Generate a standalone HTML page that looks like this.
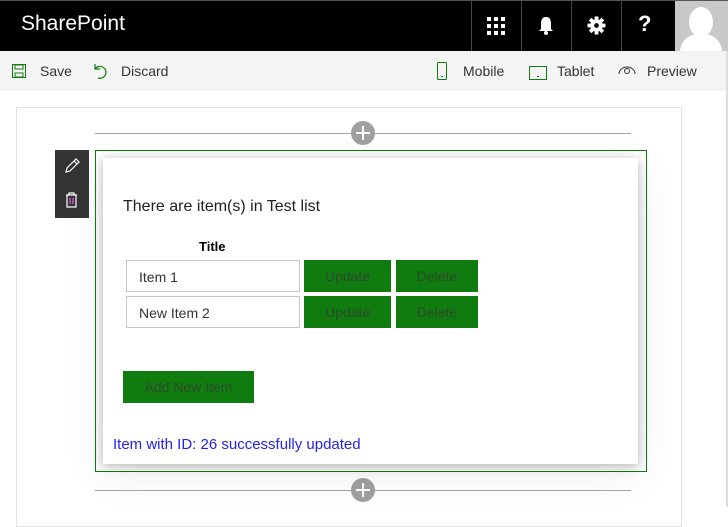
<!DOCTYPE html>
<html><head><style>
*{margin:0;padding:0;box-sizing:border-box}
body{width:728px;height:507px;overflow:hidden;background:#fff;font-family:"Liberation Sans",sans-serif;position:relative}
.a{position:absolute}
.top{left:0;top:0;width:728px;height:51px;background:#000;border-top:1px solid #555}
.sep{top:0;width:1px;height:51px;background:#444}
.tb{left:0;top:51px;width:728px;height:40px;background:#f4f4f4;font-size:14px;color:#333}
.btn{background:#107c10;color:#2d4a2d;font-size:14px;text-align:center}
.inp{border:1px solid #c8c8c8;background:#fff;font-size:14px;color:#333;padding:8px 12px}
.plus{width:24px;height:24px;border-radius:50%;background:#a0a0a0}
.plus:before{content:"";position:absolute;left:5px;top:11px;width:14px;height:2px;background:#fff}
.plus:after{content:"";position:absolute;left:11px;top:5px;width:2px;height:14px;background:#fff}
</style></head><body>
<div class="a top"></div>
<div class="a" style="left:21px;top:12px;color:#fff;font-size:21px">SharePoint</div>
<div class="a sep" style="left:471px"></div><div class="a sep" style="left:521px"></div><div class="a sep" style="left:571px"></div><div class="a sep" style="left:621px"></div>
<svg class="a" style="left:487px;top:17px" width="18" height="18"><g fill="#fff"><rect x="0" y="0" width="4" height="4"/><rect x="7" y="0" width="4" height="4"/><rect x="14" y="0" width="4" height="4"/><rect x="0" y="7" width="4" height="4"/><rect x="7" y="7" width="4" height="4"/><rect x="14" y="7" width="4" height="4"/><rect x="0" y="14" width="4" height="4"/><rect x="7" y="14" width="4" height="4"/><rect x="14" y="14" width="4" height="4"/></g></svg>
<svg class="a" style="left:538px;top:16px" width="16" height="19"><path d="M8 1C4 1 3 4 3 8L3 13L1 15L15 15L13 13L13 8C13 4 12 1 8 1Z" fill="#fff"/><circle cx="8" cy="17" r="2" fill="#fff"/></svg>
<svg class="a" style="left:587px;top:16px" width="19" height="19" viewBox="-10 -10 20 20"><g fill="#fff"><circle r="6.5"/><rect x="-2" y="-9.5" width="4" height="19"/><rect x="-9.5" y="-2" width="19" height="4"/><rect x="-2" y="-9.5" width="4" height="19" transform="rotate(45)"/><rect x="-2" y="-9.5" width="4" height="19" transform="rotate(-45)"/></g><circle r="2.5" fill="#000"/></svg>
<div class="a" style="left:638px;top:11px;color:#fff;font-size:22px;font-weight:bold">?</div>
<div class="a" style="left:675px;top:1px;width:53px;height:50px;background:#c8c8c8;overflow:hidden"><div class="a" style="left:14px;top:6px;width:24px;height:30px;border-radius:50%;background:#fff"></div><div class="a" style="left:5px;top:33px;width:42px;height:30px;border-radius:18px 18px 0 0;background:#fff"></div></div>
<div class="a tb"></div>
<svg class="a" style="left:12px;top:64px" width="14" height="14"><rect x=".5" y=".5" width="13" height="13" fill="none" stroke="#107c10"/><rect x="3" y="1" width="8" height="4" fill="none" stroke="#107c10"/><rect x="3" y="9" width="8" height="4" fill="none" stroke="#107c10"/></svg>
<div class="a" style="left:40px;top:63px;font-size:14px;color:#333">Save</div>
<svg class="a" style="left:92px;top:62px" width="16" height="18"><path d="M3 2L3 7L8 7M3 7A6 6 0 1 1 6 16" fill="none" stroke="#107c10" stroke-width="1.2"/></svg>
<div class="a" style="left:121px;top:63px;font-size:14px;color:#333">Discard</div>
<svg class="a" style="left:437px;top:62px" width="10" height="18"><rect x=".5" y=".5" width="9" height="17" rx="1" fill="none" stroke="#107c10"/><rect x="4" y="14" width="2" height="1" fill="#107c10"/></svg>
<div class="a" style="left:463px;top:63px;font-size:14px;color:#333">Mobile</div>
<svg class="a" style="left:529px;top:66px" width="18" height="14"><rect x=".5" y=".5" width="17" height="13" fill="none" stroke="#107c10"/><rect x="8" y="10" width="2" height="1" fill="#107c10"/></svg>
<div class="a" style="left:557px;top:63px;font-size:14px;color:#333">Tablet</div>
<svg class="a" style="left:618px;top:65px" width="18" height="10"><path d="M1 9A8 7 0 0 1 17 9" fill="none" stroke="#333"/><circle cx="9" cy="6" r="2.5" fill="none" stroke="#333"/></svg>
<div class="a" style="left:647px;top:63px;font-size:14px;color:#333">Preview</div>
<div class="a" style="left:16px;top:107px;width:666px;height:420px;border:1px solid #e1e1e1"></div>
<div class="a" style="left:95px;top:133px;width:536px;height:1px;background:#a6a6a6"></div>
<div class="a plus" style="left:351px;top:121px"></div>
<div class="a" style="left:95px;top:490px;width:536px;height:1px;background:#a6a6a6"></div>
<div class="a plus" style="left:351px;top:478px"></div>
<div class="a" style="left:95px;top:150px;width:552px;height:322px;border:1px solid #107c10"></div>
<div class="a" style="left:103px;top:158px;width:535px;height:306px;background:#fff;box-shadow:0 2px 10px rgba(0,0,0,.25),0 10px 40px rgba(0,0,0,.08)"></div>
<div class="a" style="left:55px;top:150px;width:34px;height:68px;background:#333"></div>
<svg class="a" style="left:63px;top:157px" width="18" height="18"><path d="M3 15L4 11L13 2L16 5L7 14Z M11 4L14 7" fill="none" stroke="#fff" stroke-width="1.2"/></svg>
<svg class="a" style="left:65px;top:192px" width="13" height="16"><path d="M1 3H12M4 3V1H9V3M2 3V15H11V3M5 6V12M8 6V12" fill="none" stroke="#fff" stroke-width="1.2"/><path d="M5 6V12M8 6V12" stroke="#e040e0"/></svg>
<div class="a" style="left:123px;top:198px;font-size:16px;color:#222">There are item(s) in Test list</div>
<div class="a" style="left:199px;top:239px;font-size:13px;font-weight:bold;color:#000">Title</div>
<div class="a inp" style="left:126px;top:260px;width:174px;height:32px">Item 1</div>
<div class="a btn" style="left:304px;top:260px;width:87px;height:32px;line-height:32px">Update</div>
<div class="a btn" style="left:396px;top:260px;width:82px;height:32px;line-height:32px">Delete</div>
<div class="a inp" style="left:126px;top:296px;width:174px;height:32px">New Item 2</div>
<div class="a btn" style="left:304px;top:296px;width:87px;height:32px;line-height:32px">Update</div>
<div class="a btn" style="left:396px;top:296px;width:82px;height:32px;line-height:32px">Delete</div>
<div class="a btn" style="left:123px;top:371px;width:131px;height:32px;line-height:32px">Add New Item</div>
<div class="a" style="left:113px;top:436px;font-size:15px;color:#2222ee">Item with ID: 26 successfully updated</div>
<div class="a" style="left:726px;top:51px;width:2px;height:456px;background:#ddd"></div>
</body></html>
